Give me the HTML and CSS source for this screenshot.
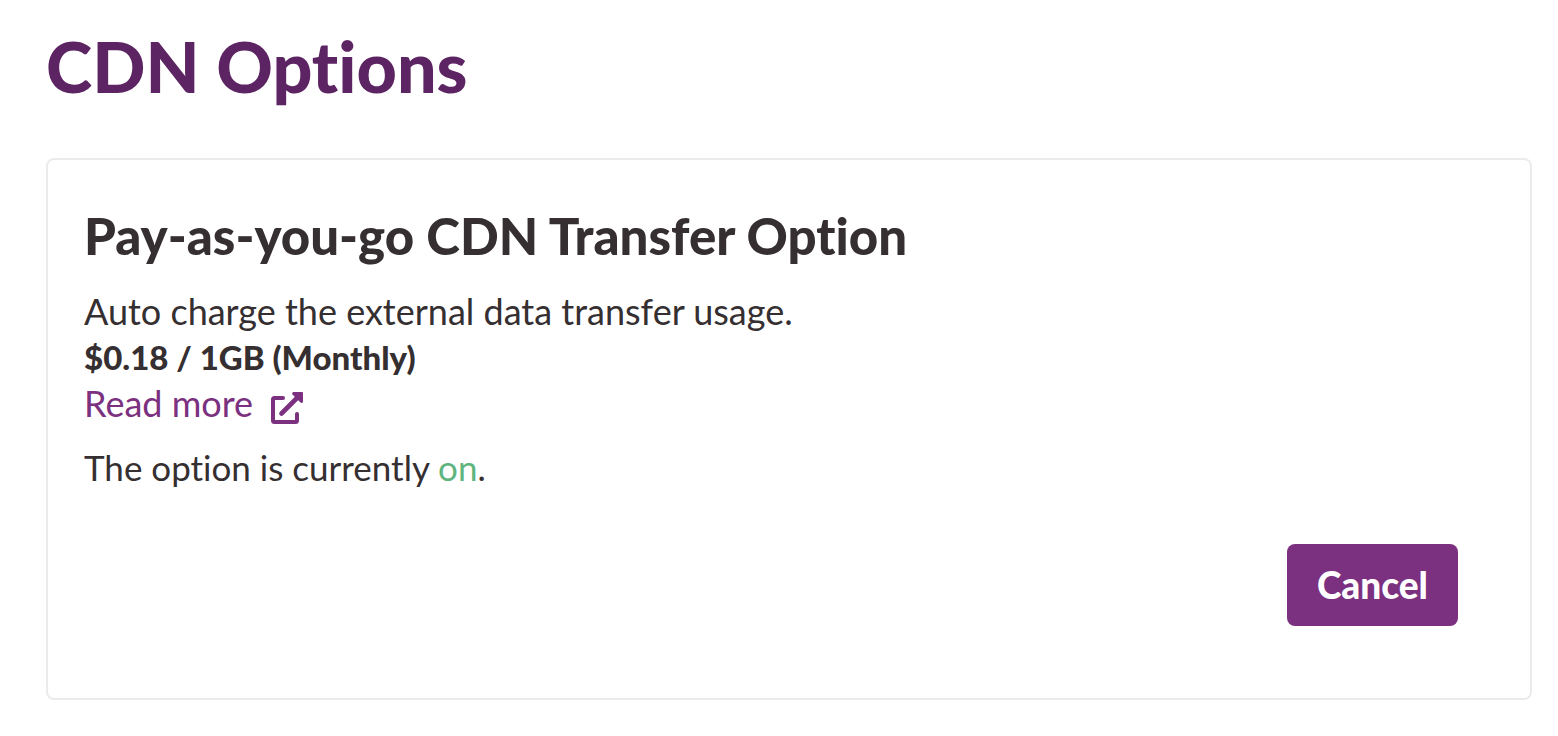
FILE: index.html
```html
<!DOCTYPE html>
<html lang="en">
<head>
<meta charset="utf-8">
<meta name="viewport" content="width=device-width, initial-scale=1">
<title>CDN Options</title>
<link rel="stylesheet" href="styles.css">
</head>
<body>
<main class="page">
  <h1 class="page-title">CDN Options</h1>
  <section class="card">
    <h2 class="card-title">Pay-as-you-go CDN Transfer Option</h2>
    <p class="text">Auto charge the external data transfer usage.</p>
    <p class="text price">$0.18 / 1GB (Monthly)</p>
    <a class="text link" href="#">Read more
      <svg class="icon" viewBox="0 0 32 32" aria-hidden="true">
        <path d="M12 6H3.500Q2 6 2 7.500V28.500Q2 30 3.500 30H24.500Q26 30 26 28.500V22" fill="none" stroke="currentColor" stroke-width="4" stroke-linecap="round"/>
        <path d="M10.500 21.500 27 5" fill="none" stroke="currentColor" stroke-width="4.600" stroke-linecap="round"/>
        <path d="M22 0H31Q32 0 32 1V10Q31 11.500 29.500 10.500L21.500 2.500Q20.500 1 22 0Z" fill="currentColor"/>
      </svg>
    </a>
    <p class="text status">The option is currently <span class="on">on</span>.</p>
    <div class="actions"><button class="button" type="button">Cancel</button></div>
  </section>
</main>
</body>
</html>
```
FILE: styles.css
```css
* { box-sizing: border-box; }
body {
  margin: 0;
  background: #fff;
  color: #352f31;
  font-family: Lato, "Open Sans", sans-serif;
  font-variant-ligatures: none;
}
.page { padding: 22px 26px 36px 46px; }
.page-title {
  margin: 0 0 48px;
  color: #5c2462;
  font-size: 70px;
  font-weight: 900;
  line-height: 88px;
}
.card {
  padding: 46px 72px 72px 36px;
  border: 2px solid #ebebeb;
  border-radius: 8px;
}
.card-title {
  margin: 0 0 22px;
  font-size: 51px;
  font-weight: 900;
  line-height: 60px;
}
.text {
  margin: 0;
  font-size: 36px;
  line-height: 46px;
}
.price { font-size: 33px; font-weight: 900; }
.link {
  display: flex;
  align-items: center;
  gap: 18px;
  width: fit-content;
  color: #7b3180;
  text-decoration: none;
}
.icon { width: 32px; height: 32px; margin-top: 10px; }
.status { margin-top: 18px; font-size: 35px; }
.on { color: #60b57f; }
.actions { display: flex; justify-content: flex-end; margin-top: 54px; }
.button {
  padding: 18px 30px;
  border: 0;
  border-radius: 8px;
  background: #7b3180;
  color: #fff;
  font: inherit;
  font-size: 37px;
  font-weight: 900;
  line-height: 46px;
}
```
